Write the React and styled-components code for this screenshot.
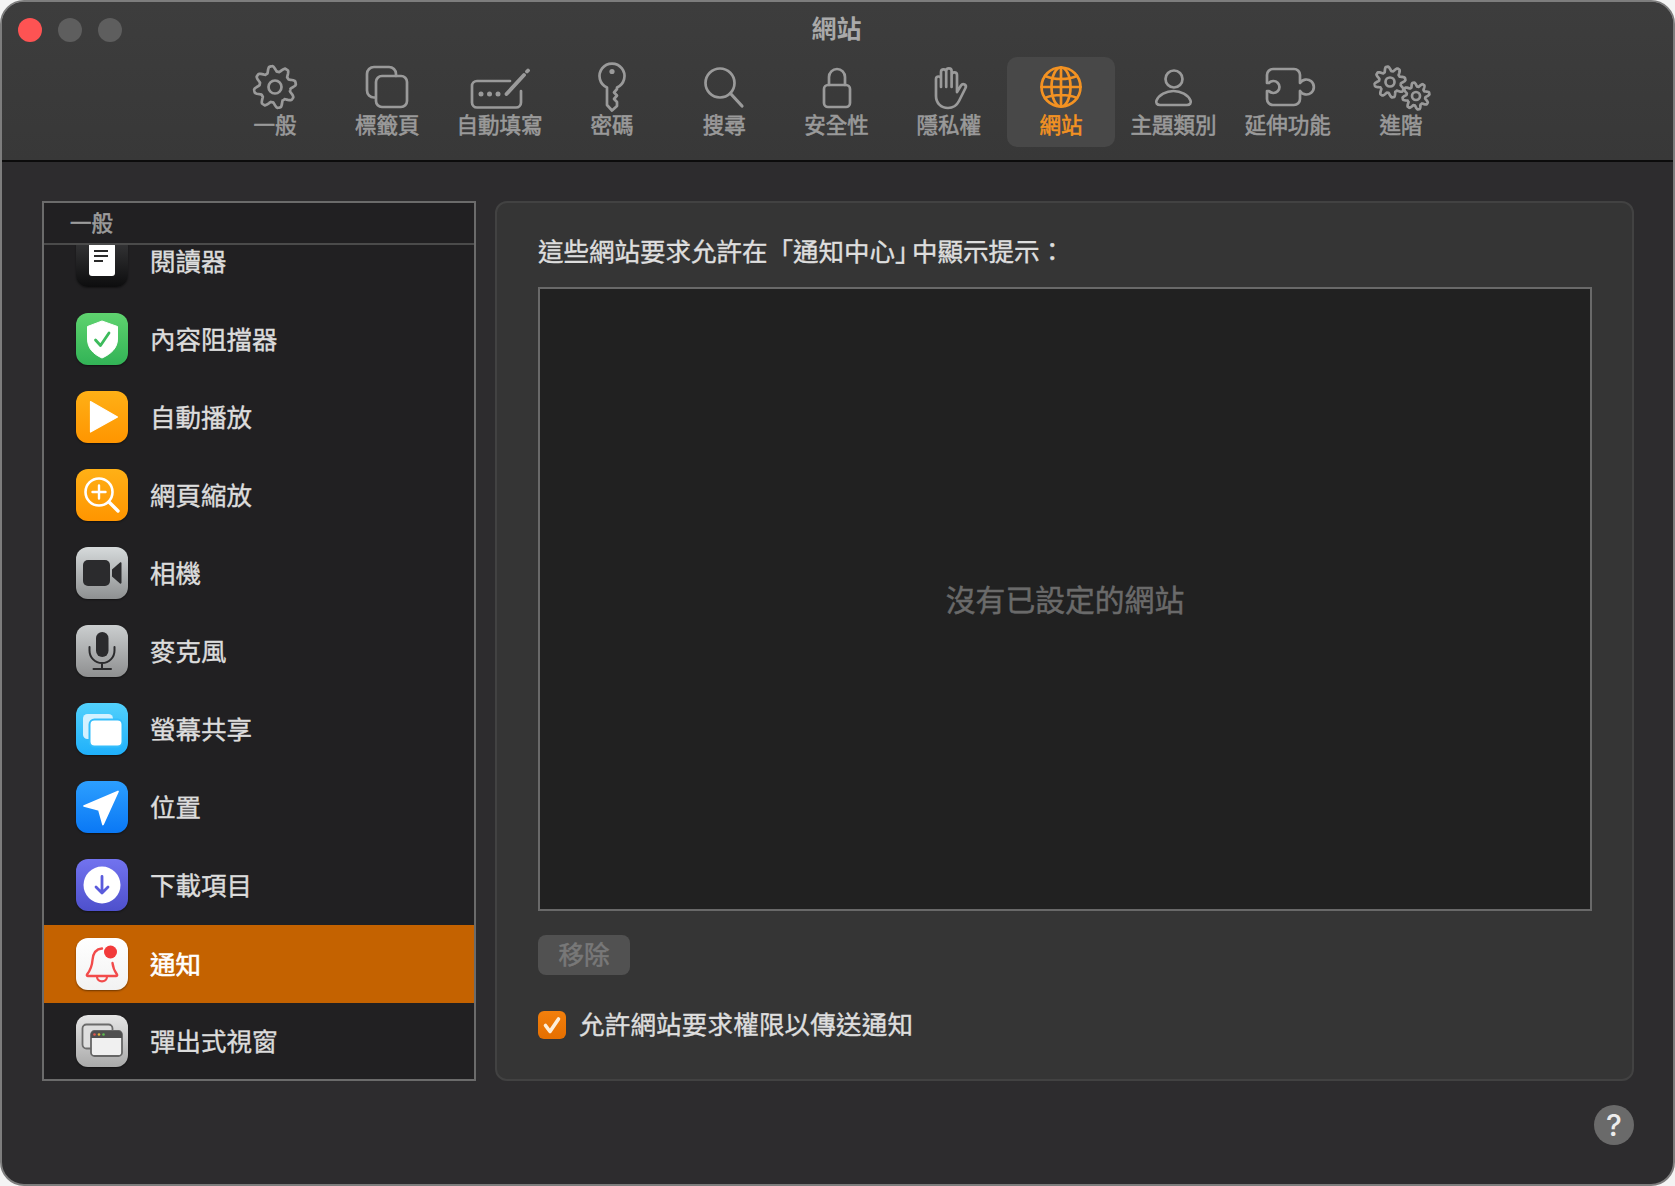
import React from 'react'
import styled, { createGlobalStyle } from 'styled-components'

const CJK = '"Noto Sans CJK TC", "Noto Sans", sans-serif'

const GlobalStyle = createGlobalStyle`
  html, body {
    margin: 0;
    padding: 0;
    background: #f4f4f4;
    font-family: ${CJK};
  }
  * {
    box-sizing: border-box;
  }
`

// wavy cog outline, the toolbar has two of these
const gearPath = (cx, cy, outer, inner, teeth = 8) => {
  const mid = (outer + inner) / 2
  const amp = (outer - inner) / 2
  const points = []
  for (let i = 0; i < 160; i++) {
    const a = (i / 160) * Math.PI * 2 - Math.PI / 2
    const wave = Math.max(-1, Math.min(1, Math.cos(a * teeth + Math.PI / 2) * 1.3))
    const r = mid + amp * wave
    points.push(`${(cx + Math.cos(a) * r).toFixed(2)} ${(cy + Math.sin(a) * r).toFixed(2)}`)
  }
  return `M${points.join('L')}Z`
}

const ToolSvg = ({ children }) => (
  <svg
    width="60"
    height="56"
    viewBox="0 0 60 56"
    fill="none"
    stroke="currentColor"
    strokeWidth="2.7"
    strokeLinecap="round"
    strokeLinejoin="round"
  >
    {children}
  </svg>
)

const toolIcons = {
  general: (
    <>
      <path d={gearPath(30, 28, 21, 15.5)} />
      <circle cx="30" cy="28" r="6.5" />
    </>
  ),
  tabs: (
    <>
      <path d="M18 38.5h-1a7 7 0 0 1-7-7V15a7 7 0 0 1 7-7h15a7 7 0 0 1 7 7v2" />
      <rect x="19" y="17" width="31" height="31" rx="6" />
    </>
  ),
  autofill: (
    <>
      <path d="M40 22H7a5 5 0 0 0-5 5V43.500a5 5 0 0 0 5 5H46a5 5 0 0 0 5-5V32" />
      <path d="M36.500 35 54 16" strokeWidth="3.800" />
      <path d="M57 12.500 58 11.500" strokeWidth="3.800" />
      <circle cx="11" cy="35" r="2.500" fill="currentColor" stroke="none" />
      <circle cx="19.500" cy="35" r="2.500" fill="currentColor" stroke="none" />
      <circle cx="28" cy="35" r="2.500" fill="currentColor" stroke="none" />
    </>
  ),
  password: (
    <>
      <path d="M35 28.500A12.500 12.500 0 1 0 25 28.500V46L30 51.500 35 47V43L32 40 35 36.500 32 33.500 35 30Z" />
      <circle cx="30" cy="12.500" r="2.600" fill="currentColor" stroke="none" />
    </>
  ),
  search: (
    <>
      <circle cx="26" cy="24" r="14.500" />
      <path d="M36.500 34.500 48 47" strokeWidth="3.200" />
    </>
  ),
  security: (
    <>
      <rect x="17" y="26" width="26" height="22" rx="4" />
      <path d="M22 26v-8a8 8 0 0 1 16 0v8" />
    </>
  ),
  privacy: (
    <path d="M17 20V37C17 44 22 49 29 49 35 49 38 46 40 42L46.500 29C48 26 44 23.500 42 26.500L38 33V16a2.600 2.600 0 0 0-5.400 0V28M32.600 16V12a2.700 2.700 0 0 0-5.400 0V28M27.200 13a2.600 2.600 0 0 0-5.200 0V28M22 20a2.500 2.500 0 0 0-5 0" />
  ),
  websites: (
    <>
      <circle cx="30" cy="28" r="19.500" />
      <ellipse cx="30" cy="28" rx="9.500" ry="19.500" />
      <path d="M30 8.500V47.500M10.500 28H49.500M14 17C23 21 37 21 46 17M14 39C23 35 37 35 46 39" />
    </>
  ),
  profiles: (
    <>
      <circle cx="31" cy="20" r="8.500" />
      <path d="M17 46h27c3 0 4.500-2 3.500-4.500C45 36 38 32 30.500 32S16 36 13.500 41.500C12.500 44 14 46 17 46Z" />
    </>
  ),
  extensions: (
    <path d="M9 20V16a6 6 0 0 1 6-6H36a6 6 0 0 1 6 6V24A7.500 7.500 0 1 1 42 32V40a6 6 0 0 1-6 6H15a6 6 0 0 1-6-6V32H11A6 6 0 1 0 11 24H9Z" />
  ),
  advanced: (
    <>
      <path d={gearPath(19, 23, 15.500, 11)} />
      <circle cx="19" cy="23" r="4.500" />
      <path d={gearPath(45, 37, 13.500, 9.500)} />
      <circle cx="45" cy="37" r="4" />
    </>
  ),
}

const tools = [
  ['general', '一般'],
  ['tabs', '標籤頁'],
  ['autofill', '自動填寫'],
  ['password', '密碼'],
  ['search', '搜尋'],
  ['security', '安全性'],
  ['privacy', '隱私權'],
  ['websites', '網站'],
  ['profiles', '主題類別'],
  ['extensions', '延伸功能'],
  ['advanced', '進階'],
]

const Tile = ({ top, bottom, children }) => (
  <TileBox $top={top} $bottom={bottom}>
    <svg width="52" height="52" viewBox="0 0 52 52" fill="none">
      {children}
    </svg>
  </TileBox>
)

const siteRows = [
  {
    label: '閱讀器',
    top: '#3a3a3c',
    bottom: '#0d0d0e',
    icon: (
      <>
        <rect x="13" y="8" width="26" height="33" rx="3" fill="#fff" />
        <path d="M18 16h14M18 21h14M18 26h9" stroke="#2a2a2a" strokeWidth="1.800" />
      </>
    ),
  },
  {
    label: '內容阻擋器',
    top: '#5fd36f',
    bottom: '#32b356',
    icon: (
      <>
        <path d="M26 8 41.500 13.500V26C41.500 35 35 41 26 45 17 41 11.500 35 11.500 26V13.500Z" fill="#fff" strokeLinejoin="round" stroke="#fff" strokeWidth="1" />
        <path d="M19.500 27 24.500 32.500 33 20" stroke="#3cbb5c" strokeWidth="2.800" strokeLinecap="round" strokeLinejoin="round" />
      </>
    ),
  },
  {
    label: '自動播放',
    top: '#ffb016',
    bottom: '#ff9500',
    icon: <path d="M14.500 10.500 41.500 26 14.500 41Z" fill="#fff" stroke="#fff" strokeWidth="1.200" strokeLinejoin="round" />,
  },
  {
    label: '網頁縮放',
    top: '#ffb016',
    bottom: '#ff9500',
    icon: (
      <>
        <circle cx="23" cy="23" r="13.500" stroke="#fff" strokeWidth="2.600" />
        <path d="M23 16.500V29.500M16.500 23H29.500" stroke="#fff" strokeWidth="2.400" strokeLinecap="round" />
        <path d="M33 33 42 42" stroke="#fff" strokeWidth="3.400" strokeLinecap="round" />
      </>
    ),
  },
  {
    label: '相機',
    top: '#d6dadb',
    bottom: '#8e9091',
    icon: (
      <>
        <rect x="7" y="13" width="27" height="26" rx="5" fill="#2b2b2d" />
        <path d="M36 22.500 44 15.500C44.800 15 45.500 15.500 45.500 16.500V35.500C45.500 36.500 44.800 37 44 36.500L36 29.500Z" fill="#2b2b2d" />
      </>
    ),
  },
  {
    label: '麥克風',
    top: '#cbcecf',
    bottom: '#8e8f90',
    icon: (
      <>
        <rect x="20" y="7" width="12.500" height="25" rx="6.250" fill="#2b2b2d" />
        <path d="M13.500 22V25.500C13.500 32.500 19 38 26 38S38.500 32.500 38.500 25.500V22M26 38V44M17.500 44H35" stroke="#2b2b2d" strokeWidth="2" strokeLinecap="round" />
      </>
    ),
  },
  {
    label: '螢幕共享',
    top: '#52d1fc',
    bottom: '#1fb0fb',
    icon: (
      <>
        <rect x="7" y="11" width="30" height="25" rx="4.500" fill="#d3f1ff" />
        <rect x="13.500" y="16.500" width="33" height="27" rx="5" fill="#fff" stroke="#34bdfb" strokeWidth="2" />
      </>
    ),
  },
  {
    label: '位置',
    top: '#2c9fff',
    bottom: '#0a78f5',
    icon: <path d="M42 10.500 8 25 23 29 27 43.500Z" fill="#fff" stroke="#fff" strokeWidth="1.800" strokeLinejoin="round" />,
  },
  {
    label: '下載項目',
    top: '#7273ef',
    bottom: '#4e50cc',
    tall: true,
    icon: (
      <>
        <circle cx="26" cy="26" r="18.500" fill="#fff" />
        <path d="M26 17.500V34M20 28 26 34 32 28" stroke="#5a5bdc" strokeWidth="2.800" strokeLinecap="round" strokeLinejoin="round" />
      </>
    ),
  },
  {
    label: '通知',
    top: '#ffffff',
    bottom: '#f2f2f2',
    selected: true,
    icon: (
      <>
        <path d="M26 10.500C19.500 11 17 16 16.500 22 16 29 14.500 32 11 36.500 10.500 37.500 11 38 12 38H40C41 38 41.500 37.500 41 36.500 38.500 33 37 30 36.500 25" stroke="#f24b4b" strokeWidth="2.400" strokeLinecap="round" strokeLinejoin="round" />
        <path d="M21 38.500C21 45 31 45 31 38.500" stroke="#f24b4b" strokeWidth="2.200" />
        <circle cx="34.500" cy="14" r="6.500" fill="#f23a3a" />
      </>
    ),
  },
  {
    label: '彈出式視窗',
    top: '#e6e6e6',
    bottom: '#a9a9a9',
    icon: (
      <>
        <rect x="6.500" y="9.500" width="30" height="24" rx="4" fill="#dedede" stroke="#6b6b6b" strokeWidth="1.800" />
        <rect x="15" y="16" width="31" height="25" rx="3.500" fill="#f0f0f0" stroke="#666" strokeWidth="1.800" />
        <path d="M15 23V19.500A3.500 3.500 0 0 1 18.500 16H42.500A3.500 3.500 0 0 1 46 19.500V23Z" fill="#4f4f4f" />
        <circle cx="18.500" cy="19.500" r="1.300" fill="#e0564e" />
        <circle cx="23" cy="19.500" r="1.300" fill="#e2b33c" />
        <circle cx="27.500" cy="19.500" r="1.300" fill="#5cbb4e" />
      </>
    ),
  },
]

export default function App() {
  return (
    <>
      <GlobalStyle />
      <Window>
        <Header>
          <TitleBar>
            <Lights>
              <Light $color="#fe5353" />
              <Light $color="#5e5e5e" />
              <Light $color="#5e5e5e" />
            </Lights>
            <Title>網站</Title>
          </TitleBar>
          <Toolbar>
            {tools.map(([id, label]) => (
              <Tool key={id} $active={id === 'websites'}>
                <ToolSvg>{toolIcons[id]}</ToolSvg>
                <ToolLabel>{label}</ToolLabel>
              </Tool>
            ))}
          </Toolbar>
        </Header>
        <Body>
          <Columns>
            <Sidebar>
              <SidebarHead>一般</SidebarHead>
              <SiteList>
                {siteRows.map((row) => (
                  <SiteRow key={row.label} $selected={row.selected} $tall={row.tall}>
                    <Tile top={row.top} bottom={row.bottom}>
                      {row.icon}
                    </Tile>
                    <SiteName $selected={row.selected}>{row.label}</SiteName>
                  </SiteRow>
                ))}
              </SiteList>
            </Sidebar>
            <Panel>
              <PanelTitle>
                這些網站要求允許在「通知中心<TightQuote>」</TightQuote>中顯示提示：
              </PanelTitle>
              <SitesTable>
                <EmptyText>沒有已設定的網站</EmptyText>
              </SitesTable>
              <RemoveButton disabled>移除</RemoveButton>
              <CheckRow>
                <CheckBox>
                  <svg width="28" height="28" viewBox="0 0 28 28" fill="none">
                    <path d="M7.500 14.500 12 20.500 20.500 8" stroke="#fdeeda" strokeWidth="3.600" strokeLinecap="round" strokeLinejoin="round" />
                  </svg>
                </CheckBox>
                <CheckLabel>允許網站要求權限以傳送通知</CheckLabel>
              </CheckRow>
            </Panel>
          </Columns>
          <HelpRow>
            <HelpButton>?</HelpButton>
          </HelpRow>
        </Body>
      </Window>
    </>
  )
}

const Window = styled.div`
  display: flex;
  flex-direction: column;
  width: 1675px;
  height: 1186px;
  border: 2px solid #7d7d7d;
  border-radius: 24px;
  overflow: hidden;
  background: #2d2c2e;
`

const Header = styled.header`
  flex: none;
  height: 160px;
  background: linear-gradient(#3d3d3d, #383838);
  border-bottom: 2px solid #0c0c0c;
`

const TitleBar = styled.div`
  display: grid;
  grid-template-columns: 1fr auto 1fr;
  align-items: center;
  height: 55px;
  padding: 0 16px;
`

const Lights = styled.div`
  display: flex;
  gap: 16px;
`

const Light = styled.span`
  width: 24px;
  height: 24px;
  border-radius: 50%;
  background: ${(p) => p.$color};
`

const Title = styled.div`
  font-size: 25px;
  font-weight: 700;
  line-height: 30px;
  color: #a9a9a9;
  margin: -6px 2px 0 0;
`

const Toolbar = styled.nav`
  display: flex;
  justify-content: center;
  gap: 4.3px;
  padding-left: 1px;
`

const Tool = styled.div`
  display: flex;
  flex-direction: column;
  align-items: center;
  width: 108px;
  height: 90px;
  padding-top: 2px;
  border-radius: 10px;
  color: ${(p) => (p.$active ? '#f39222' : '#9a9a9a')};
  background: ${(p) => (p.$active ? '#484848' : 'transparent')};

  &:nth-child(10) {
    margin-left: 2px;
  }

  &:nth-child(11) {
    margin-left: 1px;
  }
`

const ToolLabel = styled.span`
  margin-top: -2px;
  font-size: 21.500px;
  line-height: 22px;
  white-space: nowrap;
  -webkit-text-stroke: 0.6px currentColor;
`

const Body = styled.main`
  flex: 1;
  min-height: 0;
  padding: 39px 39px 0 40px;
`

const Columns = styled.div`
  display: grid;
  grid-template-columns: 434px 1fr;
  gap: 19px;
  height: 880px;
`

const Sidebar = styled.aside`
  display: flex;
  flex-direction: column;
  min-height: 0;
  background: #212022;
  border: 2px solid #6b6b6b;
`

const SidebarHead = styled.div`
  flex: none;
  height: 42px;
  padding-left: 26px;
  font-size: 21.500px;
  line-height: 38px;
  color: #9c9c9c;
  border-bottom: 2px solid #4b4b4b;
  -webkit-text-stroke: 0.6px currentColor;
`

const SiteList = styled.div`
  flex: 1;
  min-height: 0;
  display: flex;
  flex-direction: column;
  justify-content: flex-end;
  overflow: hidden;
`

const SiteRow = styled.div`
  flex: none;
  display: flex;
  align-items: center;
  gap: 22px;
  height: ${(p) => (p.$tall ? 79 : 78)}px;
  padding: 0 0 ${(p) => (p.$tall ? 1 : 0)}px 32px;
  background: ${(p) => (p.$selected ? '#c46200' : 'transparent')};

  &:last-child {
    height: 76px;
  }
`

const TileBox = styled.div`
  flex: none;
  width: 52px;
  height: 52px;
  border-radius: 12px;
  background: linear-gradient(${(p) => p.$top}, ${(p) => p.$bottom});
  box-shadow: 0 1px 2px rgba(0, 0, 0, 0.45);

  svg {
    display: block;
  }
`

const SiteName = styled.span`
  padding-bottom: 2px;
  font-size: 25.500px;
  line-height: 26px;
  color: ${(p) => (p.$selected ? '#ffffff' : '#dcdcdc')};
  -webkit-text-stroke: ${(p) => (p.$selected ? 0.6 : 0.4)}px currentColor;
`

const Panel = styled.section`
  display: flex;
  flex-direction: column;
  align-items: flex-start;
  padding: 32px 40px 0 41px;
  background: #353535;
  border: 2px solid #424242;
  border-radius: 12px;
`

const PanelTitle = styled.div`
  font-size: 25.500px;
  line-height: 30px;
  color: #dedede;
  -webkit-text-stroke: 0.4px currentColor;
`

const TightQuote = styled.span`
  letter-spacing: -8.500px;
`

const SitesTable = styled.div`
  display: flex;
  align-items: center;
  justify-content: center;
  align-self: stretch;
  height: 624px;
  margin-top: 22px;
  background: #212121;
  border: 2px solid #696969;
`

const EmptyText = styled.span`
  padding-bottom: 2px;
  font-size: 29.800px;
  color: #6a6a6a;
  -webkit-text-stroke: 0.5px currentColor;
`

const RemoveButton = styled.button`
  width: 92px;
  height: 40px;
  margin-top: 24px;
  padding: 0 0 4px;
  border: none;
  border-radius: 8px;
  background: #515151;
  color: #787878;
  font-family: ${CJK};
  font-size: 25.500px;
  line-height: 36px;
  -webkit-text-stroke: 0.6px currentColor;
`

const CheckRow = styled.label`
  display: flex;
  align-items: center;
  gap: 13px;
  margin-top: 33px;
`

const CheckBox = styled.span`
  width: 28px;
  height: 28px;
  border-radius: 6px;
  background: linear-gradient(#f27f0c, #e56f00);

  svg {
    display: block;
  }
`

const CheckLabel = styled.span`
  padding-bottom: 3px;
  font-size: 25.500px;
  line-height: 30px;
  letter-spacing: 0.2px;
  color: #dedede;
  -webkit-text-stroke: 0.4px currentColor;
`

const HelpRow = styled.div`
  display: flex;
  justify-content: flex-end;
  margin-top: 24px;
`

const HelpButton = styled.div`
  width: 40px;
  height: 40px;
  border-radius: 50%;
  background: #6a6a6a;
  color: #ececec;
  font-family: Inter, sans-serif;
  font-size: 30px;
  font-weight: 500;
  line-height: 40px;
  text-align: center;
`
